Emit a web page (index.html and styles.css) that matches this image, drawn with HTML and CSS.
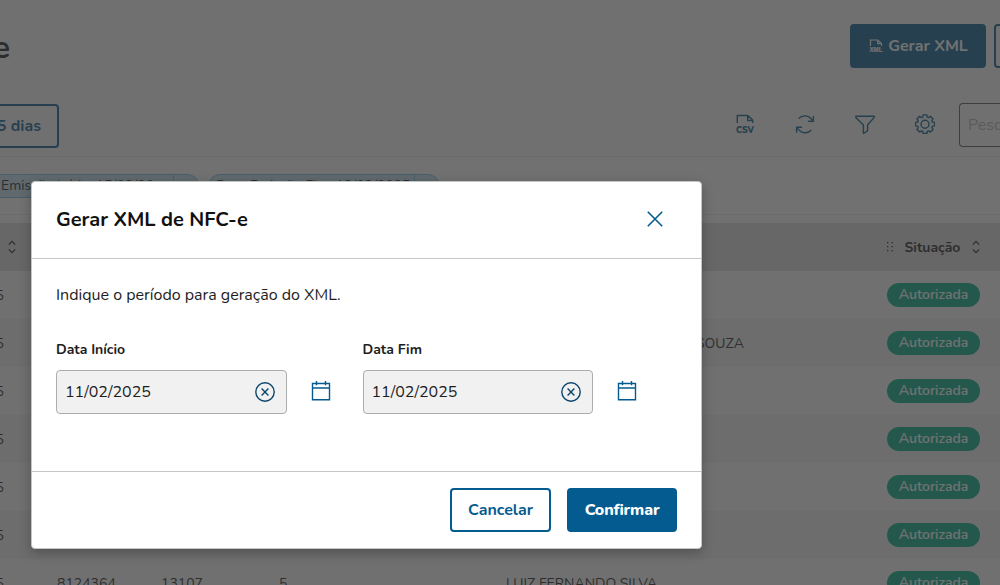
FILE: index.html
```
<!DOCTYPE html>
<html lang="pt-BR">
<head>
    <meta charset="UTF-8">
    <meta name="viewport" content="width=device-width, initial-scale=1.0">
    <title>Gerar XML de NFC-e</title>
    <link rel="stylesheet" href="styles.css">
</head>
<body>
    <div class="page">
        <div class="page-header">
            <h1 class="page-title">e</h1>
            <div class="page-actions">
                <button class="btn btn-primary btn-xml">
                    <svg class="xml-icon" viewBox="0 0 14 14">
                        <path d="M1.5 7V1h7.2L12.5 4.6V7M8.7 1v3.7h3.8" fill="none" stroke="currentColor" stroke-width="1.2"/>
                        <text class="icon-text" x="0.5" y="13" font-size="6.5" textLength="13" lengthAdjust="spacingAndGlyphs">XML</text>
                    </svg>
                    <span>Gerar XML</span>
                </button>
                <button class="btn btn-outline btn-next"></button>
            </div>
        </div>
        <div class="toolbar">
            <button class="btn btn-outline btn-days"><span>5 dias</span></button>
            <div class="tools">
                <svg class="tool" viewBox="0 0 20 20">
                    <path d="M2.3 9V1.5h10.4l5 4.6V9M12.7 1.5v5h5" fill="none" stroke="currentColor" stroke-width="1.4"/>
                    <text class="icon-text icon-csv" x="1" y="19" font-size="10" textLength="17.8" lengthAdjust="spacingAndGlyphs">CSV</text>
                </svg>
                <svg class="tool" viewBox="0 0 20 20" fill="none" stroke="currentColor" stroke-width="1.4">
                    <path d="M3.6 4.6C7.4.6 13.6.8 17.4 6.2M18.4 2V7.2H13.2M16.4 16C12.6 20 6.4 19.8 2.6 14.4M1.6 18.8V13.2H7"/>
                </svg>
                <svg class="tool" viewBox="0 0 20 20" fill="none" stroke="currentColor" stroke-width="1.4" stroke-linejoin="round">
                    <path d="M.8 2.2h18.4v1.2L12.6 11v6L8.4 19.4V11L.8 3.4Z"/>
                </svg>
                <svg class="tool" viewBox="0 0 20 20" fill="none" stroke="currentColor" stroke-width="1.4" stroke-linejoin="round">
                    <path d="M7.7 3.1 8.1.9h3.8l.4 2.2 1.2.5 1.9-1.3 2.6 2.7-1.2 1.8.5 1.2 2.2.4v3.5l-2.2.5-.5 1.2 1.2 1.8-2.6 2.7-1.9-1.3-1.2.5-.4 2.2H8.1l-.4-2.2-1.2-.5-1.9 1.3L2 15.4l1.2-1.8-.5-1.2-2.2-.5V8.4L2.7 8l.5-1.2L2 5l2.6-2.7 1.9 1.3Z"/>
                    <circle cx="10" cy="10.2" r="4"/>
                </svg>
            </div>
            <div class="search"><span>Pesquisar</span></div>
        </div>
        <div class="filters">
            <div class="chip chip-start"><span class="chip-text">Emissão Início: 15/02/20...</span><span class="chip-close"></span></div>
            <div class="chip chip-end"><span class="chip-text">Data Emissão Fim: 13/02/2025</span><span class="chip-close"></span></div>
        </div>
        <div class="table">
            <div class="row row-head">
                <svg class="sort" viewBox="0 0 8 14"><path d="M.8 4.6 4 1.4l3.2 3.2M.8 9.4 4 12.6l3.2-3.2"/></svg>
                <div class="status-head">
                    <svg class="grip" viewBox="0 0 6 10"><path d="M0 0h1.3v1.3H0zM4.5 0h1.3v1.3H4.5zM0 4h1.3v1.3H0zM4.5 4h1.3v1.3H4.5zM0 8h1.3v1.3H0zM4.5 8h1.3v1.3H4.5z"/></svg>
                    <span class="head-text">Situação</span>
                    <svg class="sort" viewBox="0 0 8 14"><path d="M.8 4.6 4 1.4l3.2 3.2M.8 9.4 4 12.6l3.2-3.2"/></svg>
                </div>
            </div>
            <div class="row"><span class="date">5</span><span class="badge">Autorizada</span></div>
            <div class="row"><span class="date">5</span><span class="surname">SOUZA</span><span class="badge">Autorizada</span></div>
            <div class="row"><span class="date">5</span><span class="badge">Autorizada</span></div>
            <div class="row"><span class="date">5</span><span class="badge">Autorizada</span></div>
            <div class="row"><span class="date">5</span><span class="badge">Autorizada</span></div>
            <div class="row"><span class="date">5</span><span class="badge">Autorizada</span></div>
            <div class="row">
                <span class="date">5</span>
                <span class="code">8124364</span>
                <span class="number">13107</span>
                <span class="serie">5</span>
                <span class="customer">LUIZ FERNANDO SILVA</span>
                <span class="badge">Autorizada</span>
            </div>
        </div>
    </div>

    <div class="overlay">
        <div class="modal">
            <div class="modal-header">
                <h2 class="modal-title">Gerar XML de NFC-e</h2>
                <svg class="close" viewBox="0 0 16 16"><path d="M.8.8l14.4 14.4M15.2.8.8 15.2"/></svg>
            </div>
            <div class="modal-body">
                <p class="modal-text">Indique o período para geração do XML.</p>
                <div class="fields">
                    <div class="field">
                        <label class="label-start">Data Início</label>
                        <div class="field-row">
                            <div class="date-input">
                                <span>11/02/2025</span>
                                <svg class="clear" viewBox="0 0 20 20"><circle cx="10" cy="10" r="9.2"/><path d="M6.6 6.6l6.8 6.8M13.4 6.6l-6.8 6.8"/></svg>
                            </div>
                            <svg class="calendar" viewBox="0 0 20 20"><path d="M1.5 2.5h17v16.3h-17zM1.5 7h17M5.5 0v4.2M14.5 0v4.2"/></svg>
                        </div>
                    </div>
                    <div class="field">
                        <label class="label-end">Data Fim</label>
                        <div class="field-row">
                            <div class="date-input">
                                <span>11/02/2025</span>
                                <svg class="clear" viewBox="0 0 20 20"><circle cx="10" cy="10" r="9.2"/><path d="M6.6 6.6l6.8 6.8M13.4 6.6l-6.8 6.8"/></svg>
                            </div>
                            <svg class="calendar" viewBox="0 0 20 20"><path d="M1.5 2.5h17v16.3h-17zM1.5 7h17M5.5 0v4.2M14.5 0v4.2"/></svg>
                        </div>
                    </div>
                </div>
            </div>
            <div class="modal-footer">
                <button class="btn btn-outline btn-cancel"><span>Cancelar</span></button>
                <button class="btn btn-primary btn-confirm"><span>Confirmar</span></button>
            </div>
        </div>
    </div>
</body>
</html>
```
FILE: styles.css
```
* {
    box-sizing: border-box;
    margin: 0;
    padding: 0;
    font-family: Nunito, Lato, "Open Sans", sans-serif;
}
body {
    width: 1000px;
    height: 585px;
    overflow: hidden;
    background: #fcfcfc;
    color: #1d1d1d;
    font-size: 14px;
}
svg {
    display: block;
    flex-shrink: 0;
}
span, h1, h2, p, label {
    white-space: nowrap;
}
.page {
    width: 1000px;
    height: 585px;
    overflow: hidden;
}
.page-header {
    display: flex;
    justify-content: space-between;
    height: 104px;
    padding-top: 24px;
    overflow: hidden;
}
.page-title {
    width: 10px;
    height: 44px;
    line-height: 48px;
    font-size: 32px;
    font-weight: 700;
    direction: rtl;
}
.page-actions {
    display: flex;
    gap: 8px;
    width: 150px;
}
.btn {
    display: flex;
    align-items: center;
    justify-content: center;
    flex-shrink: 0;
    height: 44px;
    border: 2px solid #045b8f;
    border-radius: 4px;
    font-size: 16px;
    font-weight: 700;
    white-space: nowrap;
}
.btn-primary {
    background: #045b8f;
    color: #fff;
}
.btn-outline {
    background: transparent;
    color: #045b8f;
}
.btn-xml {
    width: 136px;
    gap: 5px;
    padding-left: 1px;
}
.xml-icon {
    width: 14px;
    height: 14px;
}
.icon-text {
    font-family: "Liberation Sans", sans-serif;
    font-weight: 700;
    fill: currentColor;
    stroke: currentColor;
    stroke-width: .2;
}
.icon-csv {
    font-family: Nunito, Lato, sans-serif;
    font-weight: 800;
}
.btn-next {
    width: 80px;
}
.toolbar {
    display: flex;
    justify-content: space-between;
    height: 53px;
    border-bottom: 1px solid #eaeaea;
}
.btn-days {
    width: 59px;
    border-left: 0;
    border-radius: 0 4px 4px 0;
    justify-content: flex-end;
    padding-right: 16px;
}
.tools {
    display: flex;
    gap: 40px;
    margin-left: auto;
    padding-top: 10px;
    color: #045b8f;
}
.tool {
    width: 20px;
    height: 20px;
}
.search {
    width: 41px;
    height: 44px;
    margin: -1px 0 0 24px;
    padding-left: 8px;
    overflow: hidden;
    border: 1px solid #555;
    border-right: 0;
    border-radius: 4px 0 0 4px;
    color: #b5b5b5;
    font-size: 16px;
    line-height: 42px;
}
.filters {
    display: flex;
    gap: 9px;
    height: 58px;
    padding-top: 17px;
    border-bottom: 1px solid #eaeaea;
    background: #fff;
}
.chip {
    display: flex;
    align-items: center;
    height: 24px;
    background: #c3e3f5;
    border: 1px solid #75bfe8;
    border-radius: 12px;
}
.chip-start {
    width: 199px;
    padding-left: 1px;
    border-left: 0;
    border-radius: 0 12px 12px 0;
}
.chip-end {
    width: 232px;
    padding-left: 7px;
}
.chip-text {
    line-height: 22px;
}
.chip-close {
    width: 25px;
    height: 22px;
    margin-left: auto;
    border-left: 1px solid #75bfe8;
}
.table {
    padding-top: 8px;
    background: #fff;
}
.row {
    display: grid;
    grid-template-columns: 57px 104px 118px 227px 381px 113px;
    align-items: center;
    height: 48px;
}
.row:nth-child(odd) {
    background: #f0f0f0;
}
.row:nth-child(even) {
    background: #fcfcfc;
}
.row.row-head {
    background: #dedede;
}
.row-head > .sort {
    margin-left: 8px;
}
.sort {
    width: 8px;
    height: 14px;
    fill: none;
    stroke: #1d1d1d;
    stroke-width: 1.2;
}
.status-head {
    grid-column: 6;
    display: flex;
    align-items: center;
}
.grip {
    width: 6px;
    height: 10px;
    fill: #1d1d1d;
}
.head-text {
    width: 56px;
    margin: 0 11.5px;
    font-weight: 700;
}
.date {
    width: 4px;
    direction: rtl;
}
.surname {
    grid-column: 5;
    margin-left: 190px;
}
.badge {
    grid-column: 6;
    width: 93px;
    height: 24px;
    border-radius: 12px;
    background: #00ac86;
    color: #fff;
    font-size: 14px;
    font-weight: 600;
    line-height: 23px;
    text-align: center;
}
.overlay {
    position: absolute;
    inset: 0;
    background: rgba(53, 53, 53, .7);
}
.modal {
    position: absolute;
    left: 31px;
    top: 181px;
    display: flex;
    flex-direction: column;
    width: 671px;
    height: 368px;
    background: #fff;
    border: 1px solid #c4c6c6;
    border-radius: 4px;
    box-shadow: 0 4px 12px rgba(0, 0, 0, .25);
}
.modal-header {
    display: flex;
    align-items: center;
    justify-content: space-between;
    height: 77px;
    padding: 0 38px 1px 24px;
    border-bottom: 1px solid #c4c6c6;
}
.modal-title {
    font-size: 20px;
    font-weight: 700;
    color: #111;
}
.close {
    width: 16px;
    height: 16px;
    margin-bottom: 1px;
    fill: none;
    stroke: #045b8f;
    stroke-width: 1.6;
}
.modal-body {
    flex: 1;
    padding: 24px;
}
.modal-text {
    font-size: 16px;
    line-height: 24px;
}
.fields {
    display: flex;
    gap: 32px;
    margin-top: 32px;
}
.field label {
    display: block;
    height: 31px;
    line-height: 21px;
    font-weight: 700;
}
.field-row {
    display: flex;
    align-items: center;
    gap: 24px;
}
.date-input {
    display: flex;
    align-items: center;
    justify-content: space-between;
    width: 230.5px;
    height: 44px;
    padding: 0 11px 1px 8px;
    background: #f1f1f1;
    border: 1px solid #adadad;
    border-radius: 4px;
    font-size: 16px;
}
.clear,
.calendar {
    width: 20px;
    height: 20px;
    fill: none;
    stroke: #045b8f;
    stroke-width: 1.4;
}
.calendar {
    margin-bottom: 2px;
}
.clear {
    stroke: #0b466e;
}
.modal-footer {
    display: flex;
    justify-content: flex-end;
    gap: 16px;
    height: 77px;
    padding: 16px 24px;
    border-top: 1px solid #c4c6c6;
}
.btn-cancel {
    width: 101px;
}
.btn-confirm {
    width: 110px;
}
.btn-confirm span {
    font-weight: 800;
    letter-spacing: -.15px;
}
```
